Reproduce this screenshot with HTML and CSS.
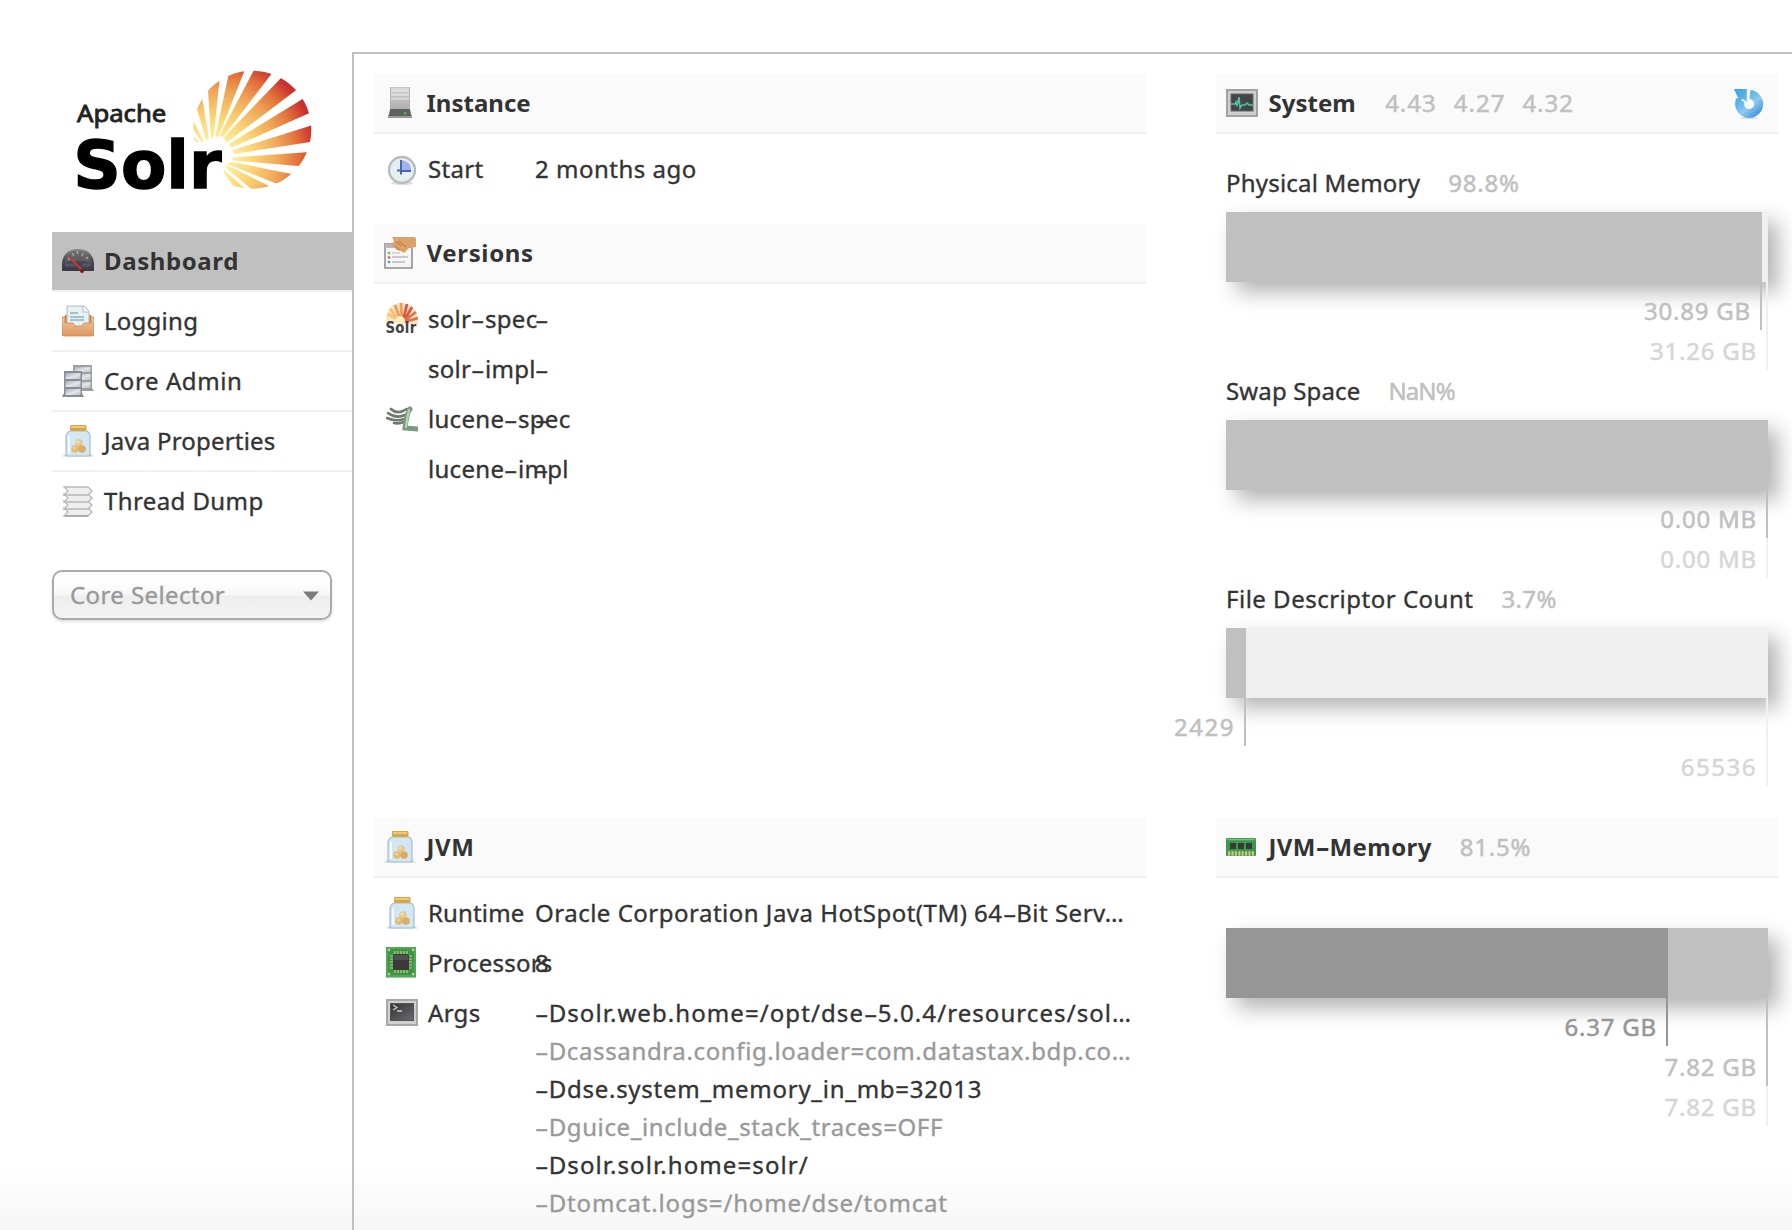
FILE: index.html
```html
<!DOCTYPE html>
<html lang="en">
<head>
<meta charset="utf-8">
<title>Solr Admin</title>
<link rel="stylesheet" href="styles.css">
</head>
<body>
<svg class="defs" width="0" height="0" aria-hidden="true">
  <defs>
    <radialGradient id="sun" gradientUnits="userSpaceOnUse" cx="520" cy="350" r="325">
      <stop offset=".12" stop-color="#fff3b0"/><stop offset=".35" stop-color="#fbd878"/><stop offset=".6" stop-color="#f0a858"/><stop offset=".78" stop-color="#e4743c"/><stop offset=".95" stop-color="#c9302f"/>
    </radialGradient>
    <clipPath id="disc"><circle cx="638" cy="268" r="177"/></clipPath>
    <linearGradient id="steel" x1="0" y1="0" x2="0" y2="1"><stop offset="0" stop-color="#dcdcdc"/><stop offset="1" stop-color="#a9a9a9"/></linearGradient>
    <linearGradient id="rack" x1="0" y1="0" x2="1" y2="1"><stop offset="0" stop-color="#a9a9b8"/><stop offset=".55" stop-color="#e4e5ea"/><stop offset="1" stop-color="#b9c4b9"/></linearGradient>
    <linearGradient id="wood" x1="0" y1="0" x2="0" y2="1"><stop offset="0" stop-color="#f3c79b"/><stop offset="1" stop-color="#dc9660"/></linearGradient>
    <linearGradient id="dial" x1="0" y1="0" x2="0" y2="1"><stop offset="0" stop-color="#8a8a8a"/><stop offset=".5" stop-color="#4a4a4e"/><stop offset="1" stop-color="#3a3a44"/></linearGradient>
    <linearGradient id="blue" gradientUnits="userSpaceOnUse" x1="4" y1="2" x2="28" y2="30"><stop offset="0" stop-color="#3fa4e2"/><stop offset=".35" stop-color="#62b4ea"/><stop offset=".6" stop-color="#8ecbf2"/><stop offset="1" stop-color="#3288d6"/></linearGradient>
    <linearGradient id="screen" x1="0" y1="0" x2="1" y2="1"><stop offset="0" stop-color="#333"/><stop offset="1" stop-color="#6a6a74"/></linearGradient>
    <symbol id="jar" viewBox="0 0 32 32">
      <path d="M0 31.500 6 27h20l6 4.500z" fill="#c9d3da"/>
      <path d="M8 6h17q3 2 3 6v17q0 2-2 2H6q-2 0-2-2V12q0-4 4-6z" fill="#d3e6f3" stroke="#a3bfd2" stroke-width="1.200"/>
      <path d="M7 11v17" stroke="#f4fafd" stroke-width="2"/>
      <rect x="8" y="0" width="16.500" height="6" rx="1" fill="#d9a545"/><path d="M9 2h14" stroke="#f4d68d" stroke-width="1.500"/>
      <circle cx="17" cy="18" r="3.800" fill="#e6c98c"/><circle cx="13" cy="24" r="3.800" fill="#dfbb74"/><circle cx="20" cy="24" r="3.800" fill="#d9ae62"/><circle cx="16" cy="17" r="1.500" fill="#f4dfb0"/><circle cx="12.500" cy="23" r="1.500" fill="#efd59c"/>
    </symbol>
  </defs>
</svg>
<div class="page">
  <aside class="sidebar">
    <svg class="logo" viewBox="100 80 730 380" role="img" aria-label="Apache Solr">
      <g clip-path="url(#disc)" fill="url(#sun)">
        <path d="M645 85 700 95 550 290 540 285z"/><path d="M727 110 775 145 562 306 550 294z"/>
        <path d="M795 172 815 216 575 322 567 312z"/><path d="M825 252 825 303 582 341 578 330z"/>
        <path d="M810 335 785 378 576 360 580 351z"/><path d="M760 402 715 432 562 371 572 364z"/>
        <path d="M690 438 640 450 555 380 562 374z"/><path d="M620 448 588 446 552 398 553 388z"/>
        <path d="M617 85 568 98 527 288 536 290z"/><path d="M540 115 505 148 514 294 522 290z"/>
        <path d="M488 175 472 205 499 300 508 295z"/><path d="M458 235 458 262 484 304 492 302z"/>
        <path d="M455 280 460 300 474 308 478 305z"/>
      </g>
      <text class="logo-top" x="112" y="246" textLength="268" lengthAdjust="spacingAndGlyphs">Apache</text>
      <text class="logo-name" x="101" y="442" textLength="445" lengthAdjust="spacingAndGlyphs">Solr</text>
    </svg>
    <nav>
      <ul class="menu">
        <li class="active"><svg class="icon" viewBox="0 0 32 32"><path d="M0 26v-6C0 10 6 4 16 4s16 6 16 16v6z" fill="url(#dial)"/><path d="M3 18Q5 6 16 6t13 12l-6-2H9z" fill="#666" opacity=".7"/><g stroke="#aaa" stroke-width="1.300"><path d="M10 8l2 3M15.500 6v3M21 8l-1 3M26 12l-2 2M6 13l2 2"/></g><path d="M3 20h10M20 20h9" stroke="#505670" stroke-width="3"/><path d="m7 12 14 14" stroke="#c73a3a" stroke-width="2.200"/><circle cx="20" cy="26" r="2" fill="#7c1818"/></svg><a>Dashboard</a></li>
        <li class="m-log"><svg class="icon" viewBox="0 0 32 32"><path d="M3 10h26l3 12v8q0 1-1 1H1q-1 0-1-1v-8z" fill="#c98652"/><path d="M5 1h17l5 5v16H5z" fill="#e6f1f3" stroke="#a5bcc1"/><path d="M21 1v6h6" fill="#fff" stroke="#a5bcc1"/><path d="M8 8h8m-8 4h14M8 15h14" stroke="#8fb2ba" stroke-width="1.300"/><path d="M0 12h3v6h8l2 3h7l2-3h7v-6h3v17q0 2-2 2H2q-2 0-2-2z" fill="url(#wood)" stroke="#ca8b57" stroke-width=".8"/></svg><a>Logging</a></li>
        <li class="m-core"><svg class="icon" viewBox="0 0 32 32"><path d="M11 0h19v23l2 3H11z" fill="#9c9ea6"/><g fill="url(#rack)"><path d="M12.500 2h16v5h-16z"/><path d="M12.500 9h16v6h-16z"/><path d="M12.500 17h16v6h-16z"/></g><path d="M2 6h18v22l2 4H0l2-4z" fill="#8b8d96"/><g fill="url(#rack)"><path d="M3.500 8h15v6h-15z"/><path d="M3.500 16h15v6h-15z"/><path d="M3.500 24h15v6h-15z"/></g></svg><a>Core Admin</a></li>
        <li class="m-java"><svg class="icon"><use href="#jar"/></svg><a>Java Properties</a></li>
        <li><svg class="icon" viewBox="0 0 32 32"><g fill="#eee" stroke="#b8b8b8" stroke-width="1.300"><path d="M2 23h24l4 4-4 4H2l4-4z"/><path d="M2 16h24l4 4-4 4H2l4-4z"/><path d="M2 9h24l4 4-4 4H2l4-4z"/><path d="M2 2h24l4 4-4 4H2l4-4z"/></g><path d="M3 31h23" stroke="#a4a4a4" stroke-width="1.500"/></svg><a>Thread Dump</a></li>
      </ul>
    </nav>
    <div class="selector"><span>Core Selector</span><svg width="18" height="12" viewBox="0 0 18 12"><path d="M1 2.500h16L9 11.500z" fill="#7d7d7d"/></svg></div>
  </aside>

  <main class="content">
    <div class="col left">
      <section class="block instance">
        <h2><svg class="icon" viewBox="0 0 32 32"><path d="M4 29 6 24h20l2 5v2H4z" fill="#9a9a9a"/><path d="M6.500 0h19v24h-19z" fill="url(#steel)" stroke="#b2b2b2"/><path d="M7 5h18M7 9h18M7 13h18" stroke="#bcbcbc"/><path d="M7 4h18M7 8h18M7 12h18" stroke="#efefef"/><path d="M6 22h20l1 7H5z" fill="#5e625e"/><circle cx="21" cy="26" r="1.600" fill="#4fb052"/></svg><span>Instance</span></h2>
        <dl>
          <div class="row"><dt><svg class="icon" viewBox="0 0 32 32"><ellipse cx="16" cy="30" rx="11" ry="2" fill="#ddd"/><circle cx="16" cy="17" r="13" fill="#e7eef0" stroke="#b8bcbe" stroke-width="2.400"/><path d="M15 7q11 1 10 12H15z" fill="#a0b3ee"/><path d="M15 7v11h10M11 17.500h4v4" fill="none" stroke="#4a64b0" stroke-width="2"/></svg><span>Start</span></dt><dd class="v-start">2 months ago</dd></div>
        </dl>
      </section>
      <section class="block versions">
        <h2><svg class="icon" viewBox="0 0 32 32"><path d="M1 7h27v24H1z" fill="#f5f5f5" stroke="#a6a6a6" stroke-width="2"/><path d="M1 7h27v4H1z" fill="#b9b9b9"/><path d="M8 20h16M8 25h13" stroke="#bbb" stroke-width="1.500"/><path d="M8 16h8" stroke="#ccc" stroke-width="1.500"/><circle cx="5" cy="16" r="1.300" fill="#69b85e"/><circle cx="5" cy="20.500" r="1.300" fill="#d45555"/><circle cx="5" cy="25" r="1.300" fill="#5585d4"/><path d="M8 0h22l2 1v9l-7 1-5 5-3-2-4-1-3-3-3-1 3-5z" fill="#dda26b"/><path d="m12 5 5 4M15 4l7 6M11 9l5 4" stroke="#b97844" fill="none"/></svg><span class="t-versions">Versions</span></h2>
        <dl>
          <div class="row"><dt><svg class="icon" viewBox="0 0 32 32"><path d="M1 20A15 15 0 0 1 16 0q12 1 16 14v7z" fill="#fbe3bd"/><g stroke-width="2.800" fill="none"><path d="M14 18 2 11M14 18 4 6" stroke="#f2c078"/><path d="M15 18 9 2M16 18 15 0" stroke="#ee9c5c"/><path d="M17 18 21 1M18 18 26 4" stroke="#d85a44"/><path d="M18 18 30 9M18 19 32 15" stroke="#dd7050"/></g><circle cx="14" cy="18" r="5" fill="#fdecc0"/><text class="mini" x="-.5" y="30" textLength="31" lengthAdjust="spacingAndGlyphs">Solr</text></svg><span>solr<b class="hy">-</b>spec</span></dt><dd><b class="hy">-</b></dd></div>
          <div class="row"><dt><i class="icon"></i><span>solr<b class="hy">-</b>impl</span></dt><dd><b class="hy">-</b></dd></div>
          <div class="row"><dt><svg class="icon" viewBox="0 0 32 32"><g fill="none" stroke-linecap="round"><path d="M5 6q5 5 12 2 4-3 7-2M2 10q8 6 17 2M1 15q8 4 17 1M8 20q5 1 10-1" stroke="#6d7a70" stroke-width="2.600"/><path d="M24 6q-3 3-5 19l13 1" stroke="#7c9a80" stroke-width="5"/><path d="M23 7q-2 8-3 17" stroke="#b9d5b8" stroke-width="2.200"/></g></svg><span>lucene<b class="hy">-</b>spec</span></dt><dd><b class="hy">-</b></dd></div>
          <div class="row"><dt><i class="icon"></i><span>lucene<b class="hy">-</b>impl</span></dt><dd><b class="hy">-</b></dd></div>
        </dl>
      </section>
      <section class="block">
        <h2><svg class="icon"><use href="#jar"/></svg><span class="t-jvm">JVM</span></h2>
        <dl>
          <div class="row"><dt><svg class="icon"><use href="#jar"/></svg><span class="t-run">Runtime</span></dt><dd class="v-run">Oracle Corporation Java HotSpot(TM) 64<b class="hy">-</b>Bit Serv…</dd></div>
          <div class="row"><dt><svg class="icon" viewBox="0 0 32 32"><rect x="0" y="0" width="30" height="30.500" fill="#3d9347"/><rect x="1" y="1" width="28" height="28" fill="none" stroke="#6cba6b"/><g stroke="#c9cd7b" stroke-width="1.200"><path d="M9 4v22M12 4v22M15 4v22M18 4v22M21 4v22M4 9h22M4 12h22M4 15h22M4 18h22M4 21h22"/></g><rect x="7" y="7" width="16" height="16" rx="1.500" fill="#3a3a3c"/><path d="M8 8h14v5H8z" fill="#505052"/><g fill="#c8d68f"><circle cx="3" cy="3" r="1.200"/><circle cx="27" cy="3" r="1.200"/><circle cx="3" cy="27" r="1.200"/><circle cx="27" cy="27" r="1.200"/></g></svg><span class="t-proc">Processors</span></dt><dd>8</dd></div>
          <div class="row args"><dt><svg class="icon" viewBox="0 0 32 32"><rect x="1" y="3" width="30" height="25" fill="#cfcfcf" stroke="#a8a8a8" stroke-width="2"/><rect x="4.500" y="6.500" width="23" height="17" fill="url(#screen)" stroke="#555"/><path d="m7 8 4 2.500L7 13M11 14h5" fill="none" stroke="#ccc" stroke-width="1.300"/></svg><span>Args</span></dt>
            <dd><ul>
              <li class="a1"><b class="hy">-</b>Dsolr.web.home=/opt/dse<b class="hy">-</b>5.0.4/resources/sol…</li>
              <li class="a2"><b class="hy">-</b>Dcassandra.config.loader=com.datastax.bdp.co…</li>
              <li class="a3"><b class="hy">-</b>Ddse.system_memory_in_mb=32013</li>
              <li class="a4"><b class="hy">-</b>Dguice_include_stack_traces=OFF</li>
              <li class="a5"><b class="hy">-</b>Dsolr.solr.home=solr/</li>
              <li class="a6"><b class="hy">-</b>Dtomcat.logs=/home/dse/tomcat</li>
            </ul></dd></div>
        </dl>
      </section>
    </div>

    <div class="col right">
      <section class="block system">
        <h2><svg class="icon" viewBox="0 0 32 32"><rect x="1" y="3" width="30" height="26" fill="#cfcfcf" stroke="#a2a2a2" stroke-width="2"/><rect x="5" y="7" width="22" height="17" fill="#414648" stroke="#666"/><path d="M5 17h4l1-2 1 4 2-9 1 11 2-3h3l2-2 2 2h4" fill="none" stroke="#55c29b" stroke-width="1.500"/></svg><span>System</span><small class="loads"><span>4.43</span><span>4.27</span><span>4.32</span></small>
        <svg class="icon reload" viewBox="0 0 32 32"><ellipse cx="17" cy="31" rx="9" ry="1.200" fill="#ddd"/><path d="M18 7.500A9.500 9.500 0 1 1 8.500 13" fill="none" stroke="url(#blue)" stroke-width="9"/><path d="M2 2h13v13l-4-3-7 4 2-5z" fill="url(#blue)"/><path d="M15.500 2v14" stroke="#eaf5fc" stroke-width="1.500"/></svg></h2>
        <h3><span class="t-pm">Physical Memory</span><small>98.8%</small></h3>
        <div class="bar max"><div class="fill" style="width: 536px"></div></div>
        <div class="ticks"><p class="tick t2 c-max">31.26 GB</p><p class="tick c-total" style="width: 536px">30.89 GB</p></div>
        <h3><span class="t-swap">Swap Space</span><small class="v-nan">NaN%</small></h3>
        <div class="bar max"><div class="fill" style="width: 542px"></div></div>
        <div class="ticks"><p class="tick t2 c-max">0.00 MB</p><p class="tick c-total" style="width: 542px">0.00 MB</p></div>
        <h3><span class="t-fd">File Descriptor Count</span><small class="v-fd">3.7%</small></h3>
        <div class="bar max"><div class="fill" style="width: 20px"></div></div>
        <div class="ticks"><p class="tick t2 c-max count">65536</p><p class="tick c-total count" style="width: 20px">2429</p></div>
      </section>
      <section class="block memory">
        <h2><svg class="icon" viewBox="0 0 32 32"><rect x="0" y="7" width="30" height="18" rx="1" fill="#3f9450"/><path d="M1 8.500h28" stroke="#77bd7c" stroke-width="1.500"/><g fill="#343b35"><rect x="4" y="12" width="6" height="6"/><rect x="12" y="12" width="6" height="6"/><rect x="20" y="12" width="6" height="6"/></g><path d="M2 22.500h27" stroke="#c9c77c" stroke-width="4.500" stroke-dasharray="2.200 1.200"/></svg><span class="t-mem">JVM<b class="hy">-</b>Memory</span><small>81.5%</small></h2>
        <div class="bar total"><div class="fill used" style="width: 442px"></div></div>
        <div class="ticks"><p class="tick t3 c-max">7.82 GB</p><p class="tick t2 c-total">7.82 GB</p><p class="tick c-used" style="width: 442px">6.37 GB</p></div>
      </section>
    </div>
  </main>
</div>
</body>
</html>
```
FILE: styles.css
```css
* { box-sizing: border-box; margin: 0; padding: 0; }
body {
  height: 1230px;
  overflow: hidden;
  font: 24px/32px "Noto Sans", "Open Sans", sans-serif;
  color: #333;
  -webkit-text-stroke: .35px;
  background: linear-gradient(#fff 1165px, #f6f6f6 1230px);
}
.defs { position: absolute; }
ul { list-style: none; }
svg { display: block; -webkit-text-stroke: 0; }
.icon { width: 32px; height: 32px; flex: none; }

/* wide hyphen */
.hy {
  display: inline-block;
  width: 13.700px;
  font-weight: inherit;
  letter-spacing: 0;
  transform: scaleX(1.75);
  transform-origin: 0 0;
}

.page { display: flex; height: 1230px; padding: 52px 0 0 52px; }
.sidebar { width: 300px; flex: none; }
.logo { width: 243.300px; height: 126.700px; margin: 14.700px 0 38.600px 21.300px; overflow: visible; }
.logo-top { font: 69px "Noto Sans", sans-serif; fill: #222; stroke: #222; stroke-width: 2.500; }
.logo-name { font: bold 199px "DejaVu Sans", sans-serif; fill: #000; stroke: #000; stroke-width: 4; }
.mini { font: bold 15px "DejaVu Sans", sans-serif; fill: #444; }

.menu li {
  display: flex;
  align-items: center;
  gap: 10px;
  height: 60px;
  padding: 0 10px;
  border-bottom: 2px solid #f0f0f0;
  letter-spacing: .4px;
}
.menu li:last-child { border-color: transparent; }
.menu .active { background: #c0c0c0; background-clip: padding-box; font-weight: bold; letter-spacing: .6px; -webkit-text-stroke: 0; }
.menu .m-log { letter-spacing: .25px; }
.menu .m-core { letter-spacing: .6px; }
.menu .m-java { letter-spacing: .2px; }
.selector {
  display: flex;
  align-items: center;
  justify-content: space-between;
  width: 280px;
  height: 50px;
  margin-top: 38px;
  padding: 0 10px 0 16px;
  border: 2px solid #aaa;
  border-radius: 10px;
  color: #999;
  letter-spacing: .4px;
  background: linear-gradient(#fff 20%, #f6f6f6 50%, #eee 52%, #f4f4f4 100%);
  box-shadow: 0 2px 3px rgba(0, 0, 0, .12);
}

.content {
  display: flex;
  gap: 70px;
  flex: 1;
  padding: 20px 14px 0 20px;
  border: solid #c0c0c0;
  border-width: 2px 0 0 2px;
}
.left { width: 772px; }
.right { width: 562px; }
h2 {
  display: flex;
  align-items: center;
  height: 60px;
  padding: 0 10px;
  border-bottom: 2px solid #f0f0f0;
  background: #fafafa;
  font-size: 24px;
  -webkit-text-stroke: 0;
}
h2 .icon { margin-right: 10.500px; }
h2 small, h3 small {
  margin-left: 28px;
  font-size: 24px;
  font-weight: normal;
  letter-spacing: .8px;
  color: #c0c0c0;
  -webkit-text-stroke: .5px;
}
.loads { display: flex; gap: 17px; }
h2 .loads { margin-left: 29.500px; letter-spacing: 1px; }
h2 .reload { margin: 0 4px 0 auto; }
.t-versions { letter-spacing: .65px; }
.t-jvm { letter-spacing: .6px; }
.t-mem { letter-spacing: .4px; }
.instance { height: 150px; }
.versions { height: 594px; }
dl { padding: 10px 12px 0; }
.row { display: flex; height: 50px; align-items: center; white-space: nowrap; }
dt { display: flex; align-items: center; gap: 10px; width: 149px; flex: none; letter-spacing: .3px; }
.t-run { letter-spacing: .15px; }
.t-proc { letter-spacing: .2px; }
.v-start { letter-spacing: .5px; }
.v-run { letter-spacing: .5px; }
.args { height: auto; align-items: flex-start; padding-top: 6px; line-height: 38px; }
.args dt { height: 38px; }
.args li:nth-child(even) { color: #999; }
.a1 { letter-spacing: 1.080px; }
.a2 { letter-spacing: .63px; }
.a3 { letter-spacing: .74px; }
.a4 { letter-spacing: .6px; }
.a5 { letter-spacing: 1.100px; }
.a6 { letter-spacing: .83px; }

.system { height: 744px; }
h3 { display: flex; height: 45px; padding-left: 10px; font-weight: normal; font-size: 24px; }
h2 + h3 { margin-top: 33px; }
.t-pm { letter-spacing: .2px; }
.t-swap { letter-spacing: .15px; }
.t-fd { letter-spacing: .5px; }
h3 .v-nan { letter-spacing: -.9px; }
h3 .v-fd { letter-spacing: .4px; }
.bar { width: 542px; height: 70px; margin-left: 10px; box-shadow: 10px 10px 20px rgba(0, 0, 0, .3); }
.max { background: #f0f0f0; }
.total { background: #c0c0c0; }
.memory .bar { margin-top: 50px; }
.fill { height: 70px; background: #c0c0c0; }
.used { background: #969696; }
.ticks { display: grid; width: 542px; margin-left: 10px; }
.system .ticks { height: 93px; }
.tick {
  grid-area: 1 / 1;
  display: flex;
  justify-content: flex-end;
  align-items: flex-end;
  height: 48px;
  padding: 0 9px 3px 0;
  border-right: 2px solid;
  white-space: nowrap;
  letter-spacing: .8px;
  -webkit-text-stroke: .5px;
}
.count { letter-spacing: 1.500px; }
.t2 { height: 88px; }
.t3 { height: 128px; }
.c-max { color: #d6d6d6; border-color: #f0f0f0; }
.c-total { color: #c0c0c0; }
.c-used { color: #969696; }
```
